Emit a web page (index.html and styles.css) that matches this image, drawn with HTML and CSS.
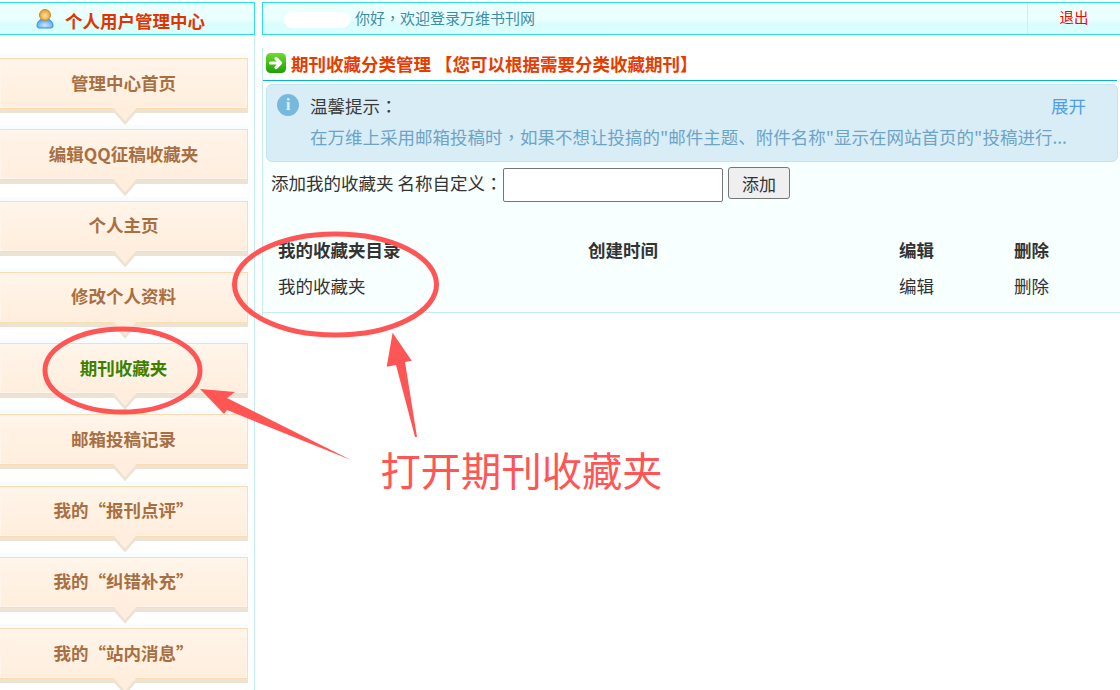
FILE: index.html
```html
<!DOCTYPE html>
<html>

<head>
    <meta charset="utf-8">
    <title>个人用户管理中心</title>
    <link rel="stylesheet" href="styles.css">
</head>

<body>
    <div class="top">
        <div class="top-title bar">
            <svg class="user-icon" width="18" height="20" viewBox="0 0 18 20">
                <defs>
                    <radialGradient id="body" cx="50%" cy="70%" r="60%">
                        <stop offset="0" stop-color="#cfe8ff" />
                        <stop offset="1" stop-color="#4ba6f5" />
                    </radialGradient>
                    <radialGradient id="head" cx="50%" cy="55%" r="55%">
                        <stop offset="0" stop-color="#ffe2a0" />
                        <stop offset="1" stop-color="#e69a2a" />
                    </radialGradient>
                </defs>
                <path d="M1 17c0-4 2.500-6.500 5-7h6c2.500.5 5 3 5 7 0 1.500-1 2-2.500 2h-11C2 19 1 18.500 1 17z" fill="url(#body)" stroke="#3d8fe0" />
                <circle cx="9" cy="6" r="5.500" fill="url(#head)" stroke="#c98a2a" />
            </svg>
            <span class="top-name">个人用户管理中心</span>
        </div>
        <div class="top-info bar">
            <span class="smudge"></span>
            <span class="welcome">你好<span class="punct">，</span>欢迎登录万维书刊网</span>
            <a class="logout">退出</a>
        </div>
    </div>

    <div class="page">
        <nav class="side">
            <a class="nav-item">管理中心首页</a>
            <a class="nav-item">编辑QQ征稿收藏夹</a>
            <a class="nav-item">个人主页</a>
            <a class="nav-item">修改个人资料</a>
            <a class="nav-item active">期刊收藏夹</a>
            <a class="nav-item">邮箱投稿记录</a>
            <a class="nav-item">我的“报刊点评”</a>
            <a class="nav-item">我的“纠错补充”</a>
            <a class="nav-item">我的“站内消息”</a>
        </nav>

        <main class="main">
            <h2 class="title">
                <svg width="20" height="20" viewBox="0 0 20 20">
                    <defs>
                        <linearGradient id="go" x1="0" y1="0" x2="0" y2="1">
                            <stop offset="0" stop-color="#6fdc2e" />
                            <stop offset="1" stop-color="#1d9f06" />
                        </linearGradient>
                    </defs>
                    <rect width="20" height="20" rx="4.500" fill="url(#go)" />
                    <path d="M4.500 10h8M10 5.500l4.500 4.500-4.500 4.500" fill="none" stroke="#fff" stroke-width="3.200" stroke-linecap="round" stroke-linejoin="round" />
                </svg>
                <span>期刊收藏分类管理 【您可以根据需要分类收藏期刊】</span>
            </h2>

            <div class="notice">
                <div class="notice-head">
                    <span class="info-dot">i</span>
                    <span class="notice-label">温馨提示<span class="punct">：</span></span>
                    <a class="expand">展开</a>
                </div>
                <p class="notice-text">在万维上采用邮箱投稿时<span class="punct">，</span>如果不想让投搞的"邮件主题、附件名称"显示在网站首页的"投稿进行...</p>
            </div>

            <div class="panel">
                <div class="add-row">
                    <label for="name">添加我的收藏夹 名称自定义<span class="punct">：</span></label>
                    <input id="name" type="text">
                    <button>添加</button>
                </div>
                <table>
                    <tr>
                        <th class="col-name">我的收藏夹目录</th>
                        <th class="col-time">创建时间</th>
                        <th class="col-edit">编辑</th>
                        <th>删除</th>
                    </tr>
                    <tr>
                        <td>我的收藏夹</td>
                        <td></td>
                        <td>编辑</td>
                        <td>删除</td>
                    </tr>
                </table>
            </div>
        </main>
    </div>

    <svg class="marks" width="1120" height="690" viewBox="0 0 1120 690">
        <ellipse cx="335.500" cy="284.500" rx="101" ry="50.500" />
        <ellipse cx="122.500" cy="370.500" rx="77.500" ry="41.500" />
        <polygon class="arrow" points="392.600,332.700 411.700,360.700 405,362 417,437 415,437 396,365 386.700,366.700" />
        <polygon class="arrow" points="200,389 235,392 227,398 351,460 227,410 224,414" />
    </svg>
    <div class="mark-text">打开期刊收藏夹</div>
</body>

</html>
```

FILE: styles.css
```css
html, body {
    height: 690px;
    overflow: hidden;
}

body {
    margin: 0;
    padding-top: 2px;
    background: #fff;
    color: #333;
    font-family: "Noto Sans CJK SC", "Liberation Sans", sans-serif;
    font-size: 17.5px;
}

.punct {
    font-family: "Noto Sans CJK TC", sans-serif;
}

.top {
    display: flex;
    gap: 7px;
    height: 33px;
}

.bar {
    display: flex;
    align-items: center;
    box-sizing: border-box;
    height: 33px;
    border: solid #2ddfe0;
    border-width: 1px 0 1px 0;
    background: linear-gradient(#ebffff 0, #ebffff 50%, #d9fdfd 70%, #dcfefe 100%);
}

.top-title {
    width: 255px;
    padding-left: 36px;
    border-right: 1px solid #2ddfe0;
    gap: 11px;
    color: #e23400;
    font-weight: bold;
}

.top-name {
    padding-top: 4px;
}

.top-info {
    flex: 1;
    border-left: 1px solid #2ddfe0;
    padding-left: 92px;
    color: #3e8da8;
    font-size: 15px;
}

.smudge {
    position: absolute;
    left: 284px;
    top: 12px;
    width: 66px;
    height: 16px;
    border-radius: 8px;
    background: #fff;
}

.welcome {
    flex: 1;
    padding-bottom: 2px;
}

.logout {
    display: flex;
    align-items: center;
    justify-content: center;
    box-sizing: border-box;
    width: 93px;
    height: 100%;
    padding-bottom: 4px;
    border-left: 1px solid #c5f3f3;
    color: #f00;
    font-size: 14.500px;
}

.page {
    display: flex;
    gap: 7px;
}

.side {
    width: 255px;
    height: 655px;
    box-sizing: border-box;
    padding-top: 23px;
    padding-right: 6px;
    border-right: 1px solid #c5efef;
    overflow: hidden;
}

.nav-item {
    position: relative;
    display: flex;
    align-items: center;
    justify-content: center;
    box-sizing: border-box;
    height: 51px;
    margin-bottom: 20.250px;
    padding-bottom: 3px;
    border: 1px solid #fedcb0;
    border-left: 0;
    background: linear-gradient(#fff5ea, #ffeedd);
    box-shadow: inset 0 0 0 1px #fff5ea, 0 4px 0 #ece3d4, 0 -4px 0 #f7fdfe;
    color: #a86f42;
    font-weight: bold;
}

.nav-item::before,
.nav-item::after {
    content: "";
    position: absolute;
    left: 111px;
    width: 28px;
    height: 16px;
    clip-path: polygon(0 0, 100% 0, 50% 100%);
}

.nav-item::before {
    top: 50px;
    background: #ece3d4;
}

.nav-item::after {
    top: 46px;
    background: #ffeedd;
}

.nav-item.active {
    color: #3c8000;
}

.main {
    flex: 1;
    margin-top: 13px;
    border-left: 1px solid #c5efef;
    height: 269px;
}

.title {
    display: flex;
    align-items: center;
    gap: 5px;
    box-sizing: content-box;
    height: 30px;
    margin: 0 3px 3px 0;
    padding: 0 0 2px 3px;
    border-bottom: 1px solid #00b8d4;
    color: #e63c00;
    font-size: 17.500px;
}

.notice {
    box-sizing: border-box;
    height: 78px;
    margin: 0 2px 0 3px;
    padding: 5px 0 0 10px;
    border: 1px solid #bce8f1;
    border-radius: 6px;
    background: #d9edf7;
}

.notice-head {
    display: flex;
    align-items: center;
    height: 30px;
    color: #3b3b3b;
}

.info-dot {
    display: flex;
    align-items: center;
    justify-content: center;
    width: 22px;
    height: 22px;
    margin-right: 11px;
    border-radius: 50%;
    background: #77b9dd;
    color: #d9edf7;
    font-family: "Liberation Serif", serif;
    font-size: 17px;
    font-weight: bold;
}

.notice-label {
    flex: 1;
}

.expand {
    margin-right: 31px;
    color: #4f9fe8;
}

.notice-text {
    margin: 4px 0 0 33px;
    color: #6da4c6;
    white-space: nowrap;
}

.panel {
    box-sizing: border-box;
    height: 151px;
    padding: 6px 0 0 8px;
    background: #f7ffff;
    border-bottom: 1px solid #c5efef;
}

.add-row {
    display: flex;
    align-items: flex-start;
    height: 34px;
}

.add-row label {
    margin-right: 0.500px;
    line-height: 30px;
    font-size: 17.500px;
}

.add-row input {
    box-sizing: border-box;
    width: 220px;
    height: 34px;
    margin: 0 5px 0 0;
    border: 1px solid #767676;
    border-radius: 2px;
    background: #fff;
}

.add-row button {
    width: 62px;
    height: 32px;
    margin-top: -1px;
    padding: 0;
    border: 1px solid #767676;
    border-radius: 3px;
    background: #efefef;
    color: #333;
    font-family: inherit;
    font-size: 17px;
}

table {
    margin-top: 29px;
    margin-left: 7px;
    border-collapse: collapse;
}

th, td {
    height: 36px;
    padding: 0;
    text-align: left;
}

.col-name { width: 310px; }
.col-time { width: 311px; }
.col-edit { width: 115px; }

.marks {
    position: absolute;
    left: 0;
    top: 0;
    pointer-events: none;
}

.marks ellipse {
    fill: none;
    stroke: #ff5555;
    stroke-width: 5;
}

.marks .arrow {
    fill: #ff5555;
}

.mark-text {
    position: absolute;
    left: 380.500px;
    top: 441px;
    color: #ff5555;
    font-size: 40.300px;
    line-height: 56px;
}
```
